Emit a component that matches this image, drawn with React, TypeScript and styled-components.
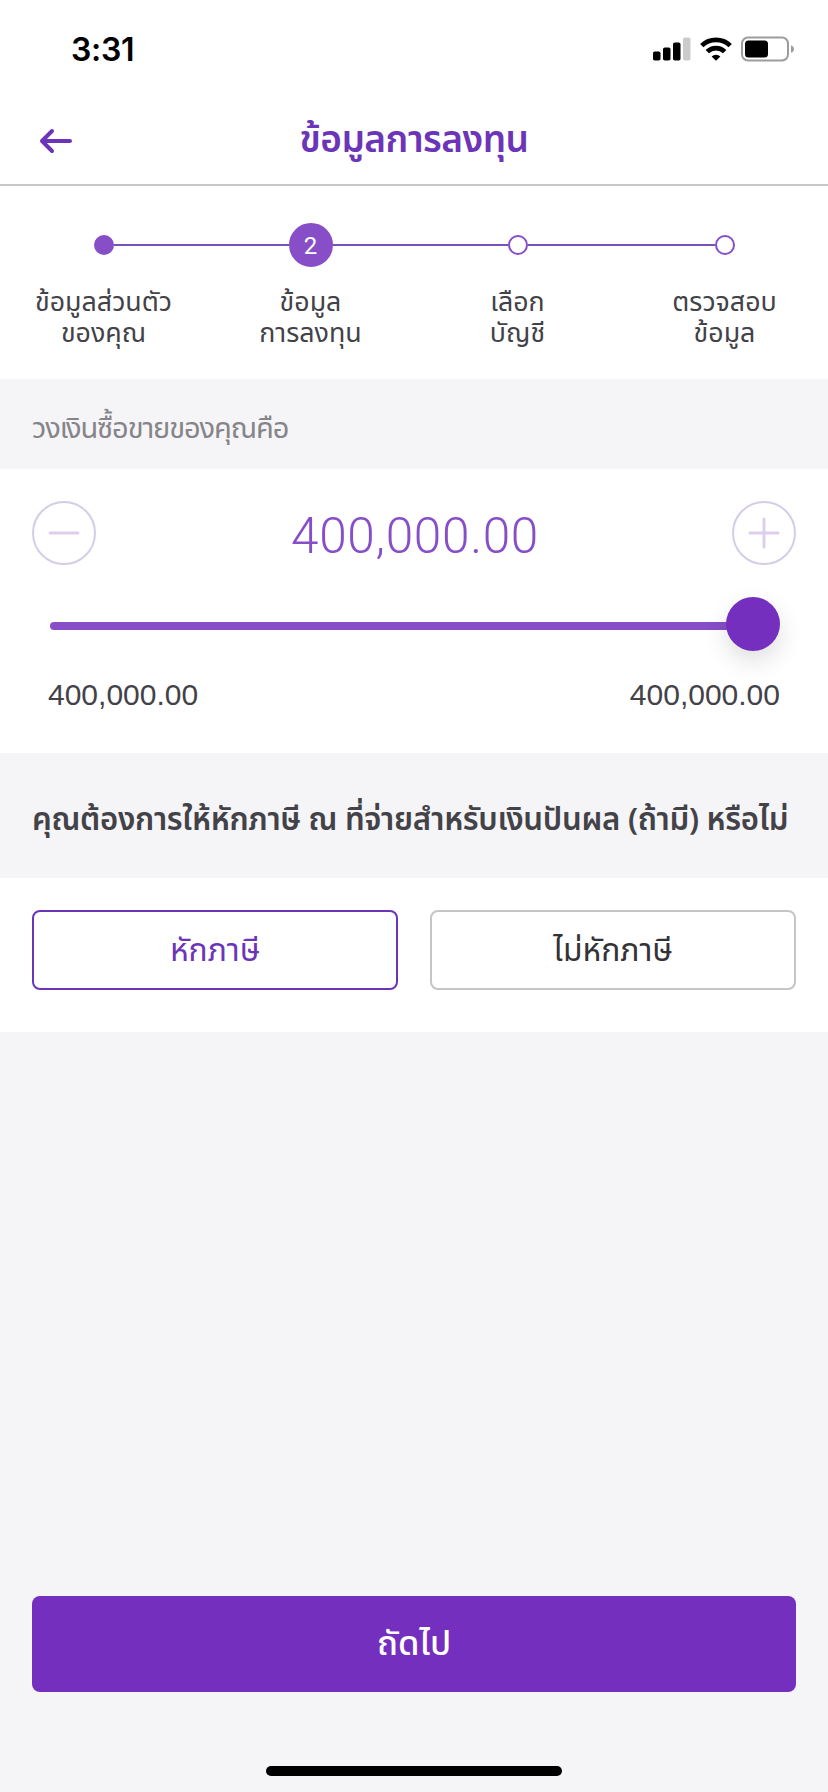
import React from "react";
import styled, { createGlobalStyle } from "styled-components";

const purple = "#752fbe";
const violet = "#874ec8";
const thai = '"Noto Sans Thai", "Noto Sans", "Liberation Sans", sans-serif';

const GlobalStyle = createGlobalStyle`
  * { box-sizing: border-box; }
  body { margin: 0; background: #f5f5f7; font-family: ${thai}; }
  button { font-family: inherit; padding: 0; cursor: pointer; }
`;

const Screen = styled.main`
  width: 828px;
  height: 1792px;
  display: flex;
  flex-direction: column;
  background: #f5f5f7;
  overflow: hidden;
`;

const StatusBar = styled.div`
  height: 98px;
  padding: 0 33px 0 71px;
  display: flex;
  justify-content: space-between;
  align-items: center;
  background: #fff;
`;

const Clock = styled.span`
  font: 600 32px/40px Inter, sans-serif;
  letter-spacing: -0.3px;
  padding-top: 2px;
  color: #000;
`;

const StatusIcons = styled.div`
  display: flex;
  align-items: center;
  gap: 9px;
`;

const Header = styled.header`
  height: 88px;
  padding: 0 39px;
  display: grid;
  grid-template-columns: 60px 1fr 60px;
  align-items: center;
  background: #fff;
  border-bottom: 2px solid #c7c7c7;
`;

const BackButton = styled.button`
  display: flex;
  border: 0;
  background: none;
  height: 28px;
`;

const Title = styled.h1`
  margin: 0;
  text-align: center;
  font-size: 37px;
  letter-spacing: -0.5px;
  line-height: 60px;
  font-weight: 600;
  color: #6c35b8;
`;

const Stepper = styled.ol`
  margin: 0;
  padding: 37px 0 0;
  height: 193px;
  list-style: none;
  display: grid;
  grid-template-columns: repeat(4, 1fr);
  background: #fff;
`;

const Step = styled.li`
  display: flex;
  flex-direction: column;
`;

const Track = styled.div`
  height: 44px;
  display: flex;
  align-items: center;
`;

const Line = styled.span<{ $hidden?: boolean }>`
  flex: 1;
  height: 2px;
  background: ${(p) => (p.$hidden ? "transparent" : "#7a50b9")};
`;

const Marker = styled.span<{ $state: "done" | "active" | "next" }>`
  width: ${(p) => (p.$state === "active" ? 44 : 20)}px;
  height: ${(p) => (p.$state === "active" ? 44 : 20)}px;
  border-radius: 50%;
  border: 2px solid ${violet};
  background: ${(p) => (p.$state === "next" ? "#fff" : violet)};
  color: #fff;
  font: 400 24px/42px Roboto, sans-serif;
  text-align: center;
`;

const StepLabel = styled.p`
  margin: 21px 0 0;
  text-align: center;
  white-space: pre-line;
  font-size: 26.8px;
  line-height: 31px;
  color: #434248;
`;

const Caption = styled.h2<{ $strong?: boolean }>`
  margin: 0;
  height: ${(p) => (p.$strong ? 125 : 90)}px;
  padding: 9px 0 0 32px;
  display: flex;
  align-items: center;
  white-space: nowrap;
  font-size: ${(p) => (p.$strong ? 31.2 : 29)}px;
  letter-spacing: ${(p) => (p.$strong ? -0.3 : -1.1)}px;
  font-weight: ${(p) => (p.$strong ? 600 : 400)};
  color: ${(p) => (p.$strong ? "#434248" : "#858489")};
`;

const AmountPanel = styled.section`
  height: 284px;
  padding: 32px 32px 0;
  background: #fff;
`;

const AmountRow = styled.div`
  height: 64px;
  display: flex;
  align-items: center;
  justify-content: space-between;
`;

const RoundButton = styled.button`
  width: 64px;
  height: 64px;
  display: flex;
  align-items: center;
  justify-content: center;
  border: 2px solid #d5cce8;
  border-radius: 50%;
  background: none;
`;

const Amount = styled.output`
  font: 300 49.5px/64px Roboto, sans-serif;
  letter-spacing: 0.7px;
  color: ${violet};
  padding: 6px 0 0 2px;
`;

const Slider = styled.div`
  height: 54px;
  margin: 32px 16px 0 18px;
  display: flex;
  align-items: center;
`;

const SliderFill = styled.div`
  flex: 1;
  height: 8px;
  margin: 4px -4px 0 0;
  border-radius: 4px;
  background: ${violet};
`;

const Thumb = styled.div`
  width: 54px;
  height: 54px;
  border-radius: 50%;
  background: ${purple};
  box-shadow: 0 10px 24px rgba(0, 0, 0, 0.13);
`;

const Range = styled.div`
  margin: 24px 16px 0;
  display: flex;
  justify-content: space-between;
  font: 400 30px/40px "Liberation Sans", Arial, sans-serif;
  color: #434248;
`;

const Choices = styled.section`
  height: 154px;
  padding: 32px 32px 0;
  display: grid;
  grid-template-columns: 1fr 1fr;
  gap: 32px;
  background: #fff;
`;

const Choice = styled.button<{ $selected?: boolean }>`
  height: 80px;
  padding-top: 2px;
  border: 2px solid ${(p) => (p.$selected ? "#6c35b8" : "#c5c5c6")};
  border-radius: 8px;
  background: #fff;
  font-size: 31.8px;
  color: ${(p) => (p.$selected ? "#6c35b8" : "#333236")};
`;

const Footer = styled.footer`
  margin-top: auto;
  padding: 0 32px 16px;
  display: flex;
  flex-direction: column;
  align-items: center;
  gap: 74px;
`;

const NextButton = styled.button`
  width: 100%;
  height: 96px;
  border: 0;
  border-radius: 8px;
  background: ${purple};
  color: #fff;
  font-size: 34.5px;
  font-weight: 500;
`;

const HomeIndicator = styled.div`
  width: 296px;
  height: 10px;
  border-radius: 5px;
  background: #000;
`;

const steps: { state: "done" | "active" | "next"; label: string }[] = [
  { state: "done", label: "ข้อมูลส่วนตัว\nของคุณ" },
  { state: "active", label: "ข้อมูล\nการลงทุน" },
  { state: "next", label: "เลือก\nบัญชี" },
  { state: "next", label: "ตรวจสอบ\nข้อมูล" },
];

function Signal() {
  return (
    <svg width="38" height="24" viewBox="0 0 38 24">
      <rect x="0" y="14.5" width="7.5" height="9" rx="1.8" />
      <rect x="10" y="10.5" width="7.5" height="13" rx="1.8" />
      <rect x="20" y="5.5" width="7.5" height="18" rx="1.8" />
      <rect x="30" y="0.5" width="7.5" height="23" rx="1.8" fill="#cbcbcb" />
    </svg>
  );
}

function Wifi() {
  return (
    <svg width="32" height="24" viewBox="0 0 32 24">
      <g fill="none" stroke="#000" strokeWidth="4.8">
        <path d="M1.8 8.6a20.3 20.3 0 0 1 28.4 0" />
        <path d="M7.3 14.6a12.4 12.4 0 0 1 17.4 0" />
      </g>
      <path d="M16 23.8 11.6 19.6a6.3 6.3 0 0 1 8.8 0Z" />
    </svg>
  );
}

function Battery() {
  return (
    <svg width="54" height="26" viewBox="0 0 54 26">
      <rect x="1" y="1.5" width="46" height="23" rx="6" fill="none" stroke="#9c9c9c" strokeWidth="2" />
      <rect x="4" y="4.5" width="23" height="17" rx="3.5" />
      <path d="M50 9.2c4 1.4 4 6.2 0 7.6Z" fill="#9c9c9c" />
    </svg>
  );
}

export default function App() {
  return (
    <>
      <GlobalStyle />
      <Screen>
        <StatusBar>
          <Clock>3:31</Clock>
          <StatusIcons>
            <Signal />
            <Wifi />
            <Battery />
          </StatusIcons>
        </StatusBar>
        <Header>
          <BackButton aria-label="กลับ">
            <svg width="34" height="28" viewBox="0 0 34 28" fill="none" stroke="#6c35b8" strokeWidth="4" strokeLinecap="round" strokeLinejoin="round">
              <path d="M31 14H3M13 4 3 14l10 10" />
            </svg>
          </BackButton>
          <Title>ข้อมูลการลงทุน</Title>
        </Header>
        <Stepper>
          {steps.map((step, i) => (
            <Step key={i}>
              <Track>
                <Line $hidden={i === 0} />
                <Marker $state={step.state}>{step.state === "active" ? i + 1 : null}</Marker>
                <Line $hidden={i === steps.length - 1} />
              </Track>
              <StepLabel>{step.label}</StepLabel>
            </Step>
          ))}
        </Stepper>
        <Caption>วงเงินซื้อขายของคุณคือ</Caption>
        <AmountPanel>
          <AmountRow>
            <RoundButton aria-label="ลด">
              <svg width="32" height="32" viewBox="0 0 32 32" stroke="#dccfee" strokeWidth="3" strokeLinecap="round">
                <path d="M2 16h28" />
              </svg>
            </RoundButton>
            <Amount>400,000.00</Amount>
            <RoundButton aria-label="เพิ่ม">
              <svg width="32" height="32" viewBox="0 0 32 32" stroke="#dccfee" strokeWidth="3" strokeLinecap="round">
                <path d="M2 16h28M16 2v28" />
              </svg>
            </RoundButton>
          </AmountRow>
          <Slider>
            <SliderFill />
            <Thumb />
          </Slider>
          <Range>
            <span>400,000.00</span>
            <span>400,000.00</span>
          </Range>
        </AmountPanel>
        <Caption $strong>คุณต้องการให้หักภาษี ณ ที่จ่ายสำหรับเงินปันผล (ถ้ามี) หรือไม่</Caption>
        <Choices>
          <Choice $selected>หักภาษี</Choice>
          <Choice>ไม่หักภาษี</Choice>
        </Choices>
        <Footer>
          <NextButton>ถัดไป</NextButton>
          <HomeIndicator />
        </Footer>
      </Screen>
    </>
  );
}
